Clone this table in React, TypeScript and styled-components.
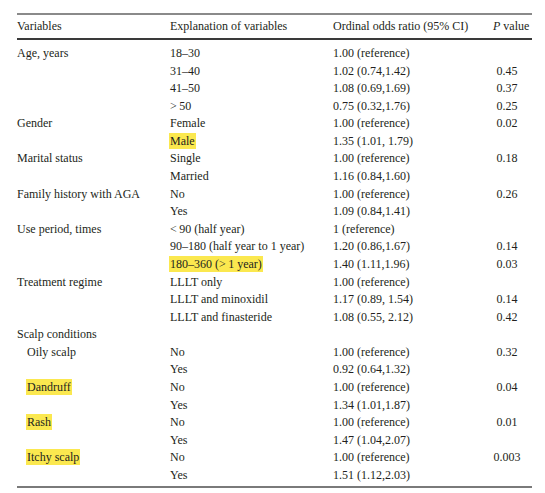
import styled, { createGlobalStyle } from "styled-components";

const GlobalStyle = createGlobalStyle`
  body {
    margin: 0;
    background: #ffffff;
  }
`;

interface RowData {
  variable?: string;
  indent?: boolean;
  markVariable?: boolean;
  explanation?: string;
  markExplanation?: boolean;
  ratio?: string;
  p?: string;
}

const rows: RowData[] = [
  { variable: "Age, years", explanation: "18–30", ratio: "1.00 (reference)" },
  { explanation: "31–40", ratio: "1.02 (0.74,1.42)", p: "0.45" },
  { explanation: "41–50", ratio: "1.08 (0.69,1.69)", p: "0.37" },
  { explanation: ">\u200950", ratio: "0.75 (0.32,1.76)", p: "0.25" },
  { variable: "Gender", explanation: "Female", ratio: "1.00 (reference)", p: "0.02" },
  { explanation: "Male", markExplanation: true, ratio: "1.35 (1.01, 1.79)" },
  { variable: "Marital status", explanation: "Single", ratio: "1.00 (reference)", p: "0.18" },
  { explanation: "Married", ratio: "1.16 (0.84,1.60)" },
  { variable: "Family history with AGA", explanation: "No", ratio: "1.00 (reference)", p: "0.26" },
  { explanation: "Yes", ratio: "1.09 (0.84,1.41)" },
  { variable: "Use period, times", explanation: "<\u200990 (half year)", ratio: "1 (reference)" },
  { explanation: "90–180 (half year to 1 year)", ratio: "1.20 (0.86,1.67)", p: "0.14" },
  { explanation: "180–360 (>\u20091 year)", markExplanation: true, ratio: "1.40 (1.11,1.96)", p: "0.03" },
  { variable: "Treatment regime", explanation: "LLLT only", ratio: "1.00 (reference)" },
  { explanation: "LLLT and minoxidil", ratio: "1.17 (0.89, 1.54)", p: "0.14" },
  { explanation: "LLLT and finasteride", ratio: "1.08 (0.55, 2.12)", p: "0.42" },
  { variable: "Scalp conditions" },
  { variable: "Oily scalp", indent: true, explanation: "No", ratio: "1.00 (reference)", p: "0.32" },
  { explanation: "Yes", ratio: "0.92 (0.64,1.32)" },
  { variable: "Dandruff", indent: true, markVariable: true, explanation: "No", ratio: "1.00 (reference)", p: "0.04" },
  { explanation: "Yes", ratio: "1.34 (1.01,1.87)" },
  { variable: "Rash", indent: true, markVariable: true, explanation: "No", ratio: "1.00 (reference)", p: "0.01" },
  { explanation: "Yes", ratio: "1.47 (1.04,2.07)" },
  { variable: "Itchy scalp", indent: true, markVariable: true, explanation: "No", ratio: "1.00 (reference)", p: "0.003" },
  { explanation: "Yes", ratio: "1.51 (1.12,2.03)" },
];

const Page = styled.div`
  padding: 13px 0 0 17px;
  font-family: "Liberation Serif", "Times New Roman", serif;
  font-size: 12px;
  color: #231f20;
`;

const Table = styled.div`
  width: 515px;
  border-top: 2px solid #8a8a8a;
  border-bottom: 2px solid #7a7a7a;
`;

const Header = styled.div`
  display: grid;
  grid-template-columns: 153px 163px 155px 1fr;
  align-items: center;
  height: 23px;
  border-bottom: 2px solid #3a3a3a;
`;

const Body = styled.div`
  padding: 5px 0 2px;
`;

const Row = styled.div`
  display: grid;
  grid-template-columns: 153px 163px 155px 1fr;
  height: 17.58px;
  line-height: 17.58px;
  white-space: nowrap;
`;

const Cell = styled.div<{ $indent?: boolean }>`
  padding-left: ${(p) => (p.$indent ? "10px" : "0")};
`;

const HeadP = styled.div`
  padding-left: 5px;
`;

const PCell = styled.div`
  width: 38px;
  text-align: center;
`;

const Mark = styled.span`
  background: #fbe84f;
  padding: 1px 1px;
  margin: 0 -1px;
`;

const App = () => {
  return (
    <Page>
      <GlobalStyle />
      <Table>
        <Header>
          <div>Variables</div>
          <div>Explanation of variables</div>
          <div>Ordinal odds ratio (95% CI)</div>
          <HeadP>
            <i>P</i> value
          </HeadP>
        </Header>
        <Body>
          {rows.map((r, i) => (
            <Row key={i}>
              <Cell $indent={r.indent}>
                {r.markVariable ? <Mark>{r.variable}</Mark> : r.variable}
              </Cell>
              <Cell>
                {r.markExplanation ? <Mark>{r.explanation}</Mark> : r.explanation}
              </Cell>
              <Cell>{r.ratio}</Cell>
              <PCell>{r.p}</PCell>
            </Row>
          ))}
        </Body>
      </Table>
    </Page>
  );
};

export default App;
